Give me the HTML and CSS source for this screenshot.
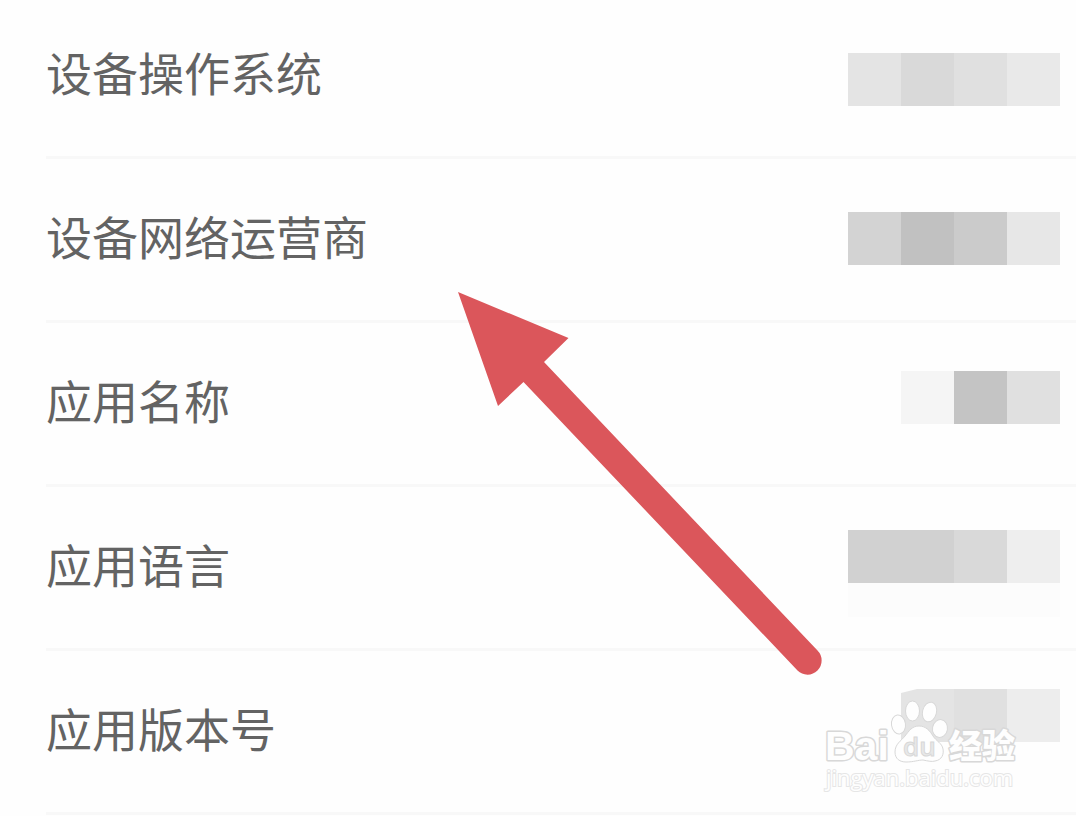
FILE: index.html
```
<!DOCTYPE html>
<html lang="zh-CN">
<head>
  <meta charset="UTF-8">
  <meta name="viewport" content="width=device-width, initial-scale=1.0">
  <title>设备信息</title>
  <link rel="stylesheet" href="styles.css">
</head>
<body>
  <main class="page">
    <ul class="list">
      <li class="list-item">设备操作系统</li>
      <li class="list-item">设备网络运营商</li>
      <li class="list-item">应用名称</li>
      <li class="list-item">应用语言</li>
      <li class="list-item">应用版本号</li>
    </ul>

    <!-- Hidden values -->
    <div class="mosaic" aria-hidden="true">
      <div class="mosaic-row">
        <span class="tile tone-e4"></span><span class="tile tone-d9"></span><span class="tile tone-e0"></span><span class="tile tone-e9"></span>
      </div>
      <div class="mosaic-row">
        <span class="tile tone-d3"></span><span class="tile tone-c1"></span><span class="tile tone-cb"></span><span class="tile tone-e7"></span>
      </div>
      <div class="mosaic-row">
        <span class="tile tone-f5"></span><span class="tile tone-c4"></span><span class="tile tone-e0"></span>
      </div>
      <div class="mosaic-row faded">
        <span class="tile tone-d1"></span><span class="tile tone-d1"></span><span class="tile tone-d9"></span><span class="tile tone-ee"></span>
      </div>
      <div class="mosaic-row">
        <span class="tile tone-e4 cut"></span><span class="tile tone-e0"></span><span class="tile tone-ed"></span>
      </div>
    </div>

    <svg class="arrow" viewBox="0 0 364 384" aria-hidden="true">
      <path d="M0 0 110.500 46 86 70 359.500 358.500A14 14 0 0 1 339.500 378.500L65.500 90 40 114Z" />
    </svg>

    <svg class="watermark" viewBox="0 0 200 100" role="img" aria-label="Baidu经验 jingyan.baidu.com">
      <text class="brand" x="1" y="60">Bai</text>
      <g class="paw">
        <ellipse cx="74.500" cy="24.500" rx="7" ry="9.500" transform="rotate(-8 74.500 24.500)" />
        <ellipse cx="88.500" cy="11" rx="7" ry="10" />
        <ellipse cx="105.500" cy="12" rx="7" ry="10" transform="rotate(14 105.500 12)" />
        <ellipse cx="116" cy="28.500" rx="7.500" ry="9" transform="rotate(10 116 28.500)" />
        <path d="M95 26C88 26 85 31 81 36 77 41 71 44 71 52 71 59 76 62 82 62 90 62 94 60 99 60 104 61 108 62 111 61 118 60 120 54 119 49 118 43 112 41 109 36 106 31 102 26 95 26Z" />
      </g>
      <text class="du" x="79" y="56">du</text>
      <text class="brand brand-cn" x="125" y="58">经验</text>
      <text class="site" x="2" y="86">jingyan.baidu.com</text>
    </svg>
  </main>
</body>
</html>
```

FILE: styles.css
```
body {
  margin: 0;
  font-family: "Noto Sans CJK SC", "Noto Sans", sans-serif;
  background-color: #fefefe;
  color: #636363;
}
.page {
  position: relative;
  overflow: hidden;
}
.list {
  list-style: none;
  margin: 0;
  padding: 0 0 0 46px;
}
.list-item {
  padding: 46px 0 55px;
  font-size: 46px;
  line-height: 60px;
  border-bottom: 3px solid #f8f8f8;
}
.list-item:first-child {
  padding-top: 41px;
}

/* Mosaic over the values */
.mosaic {
  position: absolute;
  top: 53px;
  right: 16px;
  display: flex;
  flex-direction: column;
  gap: 106px;
}
.mosaic-row {
  display: flex;
  justify-content: flex-end;
}
.faded {
  box-shadow: 0 34px 0 #fcfcfc;
}
.tile {
  width: 53px;
  height: 53px;
}
.cut {
  clip-path: polygon(0 4px, 16px 0, 100% 0, 100% 100%, 0 100%);
}
.tone-c1 { background-color: #c1c1c1; }
.tone-c4 { background-color: #c4c4c4; }
.tone-cb { background-color: #cbcbcb; }
.tone-d1 { background-color: #d1d1d1; }
.tone-d3 { background-color: #d3d3d3; }
.tone-d9 { background-color: #d9d9d9; }
.tone-e0 { background-color: #e0e0e0; }
.tone-e4 { background-color: #e4e4e4; }
.tone-e7 { background-color: #e7e7e7; }
.tone-e9 { background-color: #e9e9e9; }
.tone-ed { background-color: #ededed; }
.tone-ee { background-color: #eeeeee; }
.tone-f5 { background-color: #f5f5f5; }

.arrow {
  position: absolute;
  top: 292px;
  left: 458px;
  width: 364px;
  height: 384px;
  fill: #db565b;
}

/* Watermark */
.watermark {
  position: absolute;
  top: 700px;
  right: 52px;
  width: 200px;
  height: 100px;
  overflow: visible;
  fill: #fefefe;
  stroke: #d8d8d8;
  stroke-width: 1px;
}
.brand {
  font-family: "Liberation Sans", Arial, sans-serif;
  font-size: 41px;
  font-weight: bold;
  paint-order: stroke;
  stroke-width: 3px;
  stroke-linejoin: round;
}
.brand-cn {
  font-family: "Noto Sans CJK SC", sans-serif;
  font-size: 33px;
  font-weight: 900;
}
.du {
  font-family: "Open Sans", sans-serif;
  font-size: 26px;
  font-weight: 600;
  fill: #e8e8e8;
}
.site {
  font-family: "Open Sans", sans-serif;
  font-size: 22px;
  paint-order: stroke;
  stroke: #e6e6e6;
  stroke-width: 2px;
}
```
